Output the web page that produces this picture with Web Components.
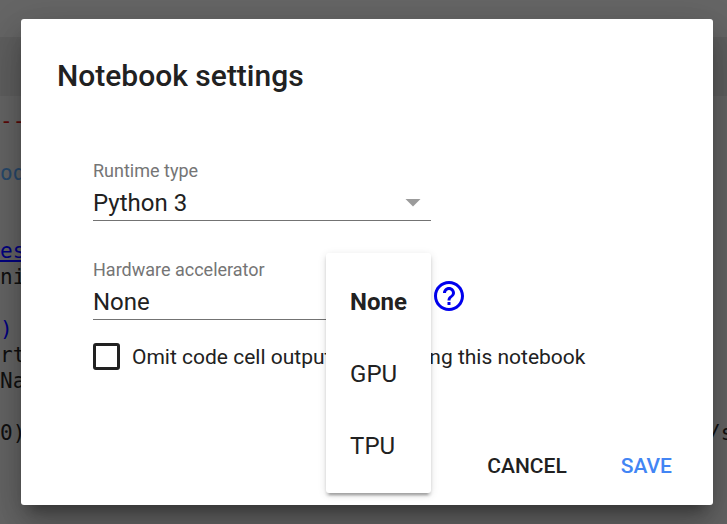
<!DOCTYPE html>
<html lang="en">
<head>
<meta charset="utf-8">
<title>Notebook settings</title>
<style>
html, body { height: 100%; }
body { margin: 0; overflow: hidden; background: #666; color: #212121; font-family: Roboto, "Liberation Sans", sans-serif; }
</style>
</head>
<body>
<notebook-app></notebook-app>
<script>
const define = (name, html, setup) => customElements.define(name, class extends HTMLElement {
  connectedCallback() {
    if (this.shadowRoot) return;
    this.attachShadow({ mode: 'open' }).innerHTML = html;
    if (setup) setup(this, this.shadowRoot);
  }
});

define('code-backdrop', `
<style>
:host { display: grid; grid-template-rows: 37px 59px 1fr; height: 100%; overflow: hidden; background: #666; }
.toolbar { background: #5f5f5f; }
pre { margin: 0; padding: 12px 0; background: #656565; color: #101010; font: 21px/26px "DejaVu Sans Mono", monospace; overflow: hidden; }
.string { color: #5c0808; }
.def { color: #28496b; }
.link, .paren { color: #000080; }
</style>
<div></div>
<div class="toolbar"></div>
<pre><span class="string">--</span>

<span class="def">od</span>


<u class="link">es</u>
ni

<span class="paren">)</span>
rt
Na

0)                                                      /s</pre>`);

define('select-field', `
<style>
:host { display: block; position: relative; }
label { display: block; font-size: 18px; line-height: 24px; color: #757575; }
.box { position: relative; border-bottom: 1px solid #737373; }
select { appearance: none; display: block; width: 100%; height: 37px; margin: 0; padding: 2px 0 0; border: 0; background: transparent; color: #212121; font: 24px/36px Roboto, "Liberation Sans", sans-serif; outline: none; }
svg { position: absolute; right: 0; top: 1px; width: 36px; height: 36px; fill: #9b9b9b; pointer-events: none; }
</style>
<label for="field"></label>
<div class="box">
  <select id="field"></select>
  <svg viewBox="0 0 24 24" aria-hidden="true"><path d="M7 10l5 5 5-5z"/></svg>
</div>
<slot></slot>`, (host, root) => {
  root.querySelector('label').textContent = host.getAttribute('label');
  const select = root.querySelector('select');
  host.getAttribute('options').split(',').forEach(text => select.add(new Option(text)));
});

define('option-menu', `
<style>
:host { display: block; position: absolute; right: 0; top: -5px; z-index: 2; box-sizing: border-box; padding: 12px 0; background: #fff; border-radius: 3px; box-shadow: 0 3px 3px rgba(0,0,0,.14), 0 2px 8px rgba(0,0,0,.12), 0 5px 2px -3px rgba(0,0,0,.2); }
button { display: block; width: 100%; height: 72px; padding: 2px 24px 0; border: 0; background: none; color: #212121; text-align: left; font: 24px/36px Roboto, "Liberation Sans", sans-serif; cursor: pointer; }
button[aria-selected="true"] { font-weight: 700; }
</style>
<div role="listbox" aria-label="Hardware accelerator">
  <button role="option" aria-selected="true">None</button>
  <button role="option" aria-selected="false">GPU</button>
  <button role="option" aria-selected="false">TPU</button>
</div>`);

define('help-link', `
<style>
:host { display: block; }
a { display: block; width: 36px; height: 36px; color: #0000ee; }
svg { display: block; width: 36px; height: 36px; fill: currentColor; }
</style>
<a href="#help" aria-label="Help"><svg viewBox="0 0 24 24" aria-hidden="true"><path d="M11 18h2v-2h-2v2zm1-16C6.48 2 2 6.48 2 12s4.48 10 10 10 10-4.48 10-10S17.52 2 12 2zm0 18c-4.41 0-8-3.59-8-8s3.59-8 8-8 8 3.59 8 8-3.59 8-8 8zm0-14c-2.21 0-4 1.79-4 4h2c0-1.1.9-2 2-2s2 .9 2 2c0 2-3 1.75-3 5h2c0-2.25 3-2.5 3-5 0-2.21-1.79-4-4-4z"/></svg></a>`);

define('check-field', `
<style>
:host { display: block; }
label { display: flex; align-items: flex-start; gap: 12px; font-size: 21px; line-height: 29px; white-space: nowrap; }
input { appearance: none; flex: none; width: 27px; height: 27px; margin: 0; border: 3px solid #212121; border-radius: 3px; }
input:checked { background: #212121; }
</style>
<label><input type="checkbox"><span><slot></slot></span></label>`);

define('text-button', `
<style>
:host { display: block; }
button { display: block; height: 54px; padding: 0; border: 0; background: none; color: inherit; font: 500 21px/54px Roboto, "Liberation Sans", sans-serif; text-transform: uppercase; cursor: pointer; }
</style>
<button type="button"><slot></slot></button>`);

define('settings-dialog', `
<style>
:host { display: flex; flex-direction: column; box-sizing: border-box; height: 100%; padding: 36px 36px 12px; background: #fff; border-radius: 3px; box-shadow: 0 24px 36px 3px rgba(0,0,0,.14), 0 9px 45px 8px rgba(0,0,0,.12), 0 12px 15px -8px rgba(0,0,0,.4); }
h2 { margin: 0; font-size: 30px; line-height: 42px; font-weight: 500; }
.body { flex: 1; padding: 62px 36px 0; }
.row { display: grid; grid-template-columns: minmax(0, 338px) 36px; }
.row + .row { margin-top: 37px; }
help-link { margin-top: 20px; }
check-field { margin-top: 23px; }
footer { display: flex; justify-content: flex-end; gap: 54px; padding-right: 5px; }
.save { color: #4285f4; }
</style>
<h2>Notebook settings</h2>
<div class="body">
  <div class="row"><select-field label="Runtime type" options="Python 3,Python 2"></select-field></div>
  <div class="row">
    <select-field label="Hardware accelerator" options="None,GPU,TPU"><option-menu></option-menu></select-field>
    <help-link></help-link>
  </div>
  <check-field>Omit code cell output when saving this notebook</check-field>
</div>
<footer><text-button>Cancel</text-button><text-button class="save">Save</text-button></footer>`,
(host, root) => { host.setAttribute('role', 'dialog'); host.setAttribute('aria-label', 'Notebook settings'); });

define('notebook-app', `
<style>
:host { display: grid; height: 100%; overflow: hidden; }
code-backdrop, .layer { grid-area: 1 / 1; min-width: 0; min-height: 0; }
.layer { position: relative; box-sizing: border-box; padding: 19px 14px 19px 21px; }
</style>
<code-backdrop aria-hidden="true"></code-backdrop>
<div class="layer"><settings-dialog></settings-dialog></div>`);
</script>
</body>
</html>
